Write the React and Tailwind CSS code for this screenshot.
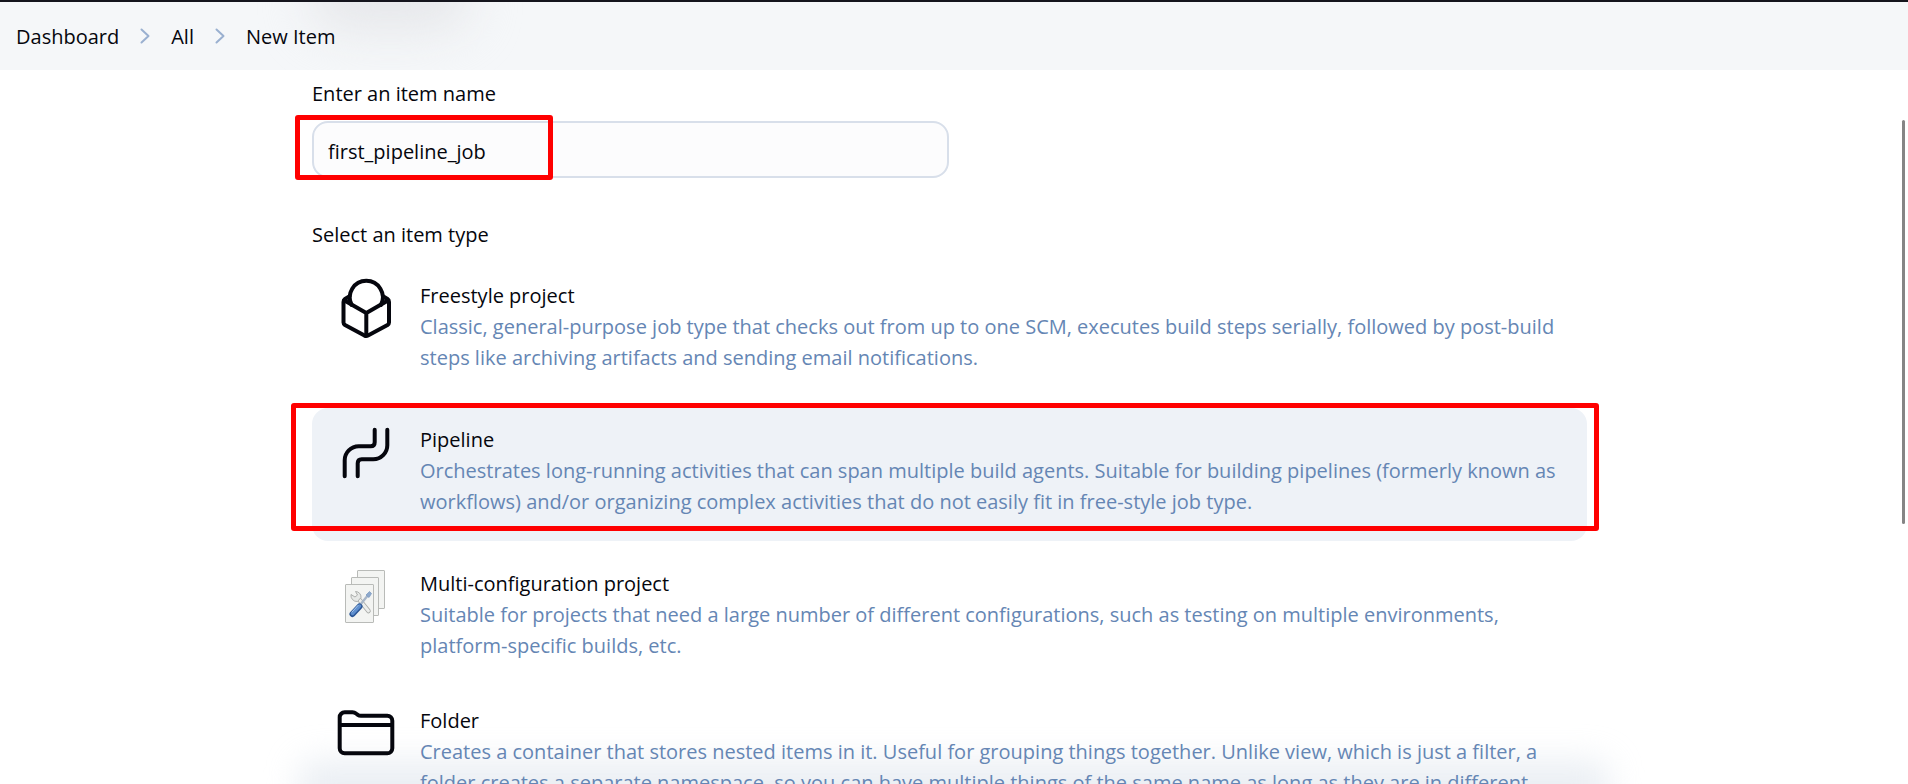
import React from "react";

function Chevron() {
  return (
    <svg className="h-4 w-[10px] shrink-0" viewBox="0 0 10 16" fill="none" stroke="#9ab0d0" strokeWidth="2" strokeLinecap="round" strokeLinejoin="round" aria-hidden="true">
      <path d="M1.5 1.5 8.5 8 1.5 14.5" />
    </svg>
  );
}

const lineIcon = {
  className: "h-[60px] w-[60px] shrink-0 overflow-visible",
  viewBox: "0 0 60 60",
  fill: "none",
  stroke: "#05060d",
  strokeWidth: 4,
  strokeLinecap: "round",
  strokeLinejoin: "round",
  "aria-hidden": true,
};

function FreestyleIcon() {
  return (
    <svg {...lineIcon}>
      <path d="M15.6 24.8A16.5 16.5 0 1 1 45 24.8" />
      <path d="M13.6 16.3 9 19Q7.5 20 7.5 22V42.500Q7.500 44 9 45L28.500 55.600Q30.300 56.500 32 55.600L51.500 45Q53 44 53 42.500V22Q53 20 51.500 19L47 16.300" />
      <path d="M8.500 20.500 30.300 33 52 20.500M30.300 33V55" />
    </svg>
  );
}

function PipelineIcon() {
  return (
    <svg {...lineIcon}>
      <path d="M38.700 5.700V18.300Q38.700 22.300 34.700 22.300H22.700A14 14 0 0 0 8.700 36.300V52.300" />
      <path d="M51.300 5.700V21.300A14 14 0 0 1 37.300 35.300H25.700Q21.700 35.300 21.700 39.300V52.300" />
    </svg>
  );
}

function FolderIcon() {
  return (
    <svg {...lineIcon}>
      <path d="M3.700 12.300A5 5 0 0 1 8.700 7.300H16.500Q18.500 7.300 20 8.500L21.800 9.800Q23 10.700 25 10.700H51.300A5 5 0 0 1 56.300 15.700V43.300A5 5 0 0 1 51.300 48.300H8.700A5 5 0 0 1 3.700 43.300ZM3.700 20H56.300" />
    </svg>
  );
}

function MultiIcon() {
  return (
    <svg className="h-[60px] w-[60px] shrink-0" viewBox="0 0 60 60" fill="none" aria-hidden="true">
      <g fill="#f3f4f2" stroke="#b9bbb8" strokeWidth="1">
        <rect x="21.500" y="2.500" width="27" height="38" rx="0.500" />
        <rect x="15.500" y="9.500" width="27" height="38" rx="0.500" />
        <rect x="9.500" y="16.500" width="28" height="38" rx="0.500" />
      </g>
      <path d="M22 30 32.500 43" stroke="#a9aba8" strokeWidth="4.500" strokeLinecap="round" />
      <path d="M22 30 32.500 43" stroke="#eceeec" strokeWidth="2.800" strokeLinecap="round" />
      <path d="M15 26.500 19 29 21.500 27 19.500 23.500A5.500 5.500 0 0 1 25 29.500L21.500 33.500A6 6 0 0 1 15 26.500Z" fill="#e6e8e6" stroke="#a5a7a5" strokeWidth="0.900" />
      <path d="M33 26 24 37" stroke="#a8b6c8" strokeWidth="2.400" />
      <path d="M30 27 33.500 23.500 35.500 25.500 33 29.500Z" fill="#8ea9cc" stroke="#7897c0" strokeWidth="0.700" />
      <path d="M23.500 38.500 16.500 46" stroke="#2c5796" strokeWidth="6" strokeLinecap="round" />
      <path d="M23.500 38 16.500 45.500" stroke="#5f8fce" strokeWidth="3.500" strokeLinecap="round" />
      <path d="M22 37.500 16 44" stroke="#a7c5ec" strokeWidth="1" strokeLinecap="round" />
    </svg>
  );
}

const items = [
  {
    id: "freestyle",
    title: "Freestyle project",
    icon: <FreestyleIcon />,
    lines: [
      "Classic, general-purpose job type that checks out from up to one SCM, executes build steps serially, followed by post-build",
      "steps like archiving artifacts and sending email notifications.",
    ],
  },
  {
    id: "pipeline",
    title: "Pipeline",
    icon: <PipelineIcon />,
    selected: true,
    lines: [
      "Orchestrates long-running activities that can span multiple build agents. Suitable for building pipelines (formerly known as",
      "workflows) and/or organizing complex activities that do not easily fit in free-style job type.",
    ],
  },
  {
    id: "multi",
    title: "Multi-configuration project",
    icon: <MultiIcon />,
    compact: true,
    lines: [
      "Suitable for projects that need a large number of different configurations, such as testing on multiple environments,",
      "platform-specific builds, etc.",
    ],
  },
  {
    id: "folder",
    title: "Folder",
    icon: <FolderIcon />,
    lines: [
      "Creates a container that stores nested items in it. Useful for grouping things together. Unlike view, which is just a filter, a",
      "folder creates a separate namespace, so you can have multiple things of the same name as long as they are in different",
    ],
  },
];

function Item({ item }) {
  return (
    <label
      className={`relative flex items-start gap-6 rounded-2xl px-6 pt-4 ${item.compact ? "pb-[17px]" : "pb-6"} ${item.selected ? "bg-[#eef2f7]" : ""}`}
    >
      <input type="radio" name="item-type" value={item.id} defaultChecked={item.selected} className="sr-only" />
      {item.icon}
      <span className="min-w-0 flex-1">
        <span className="block">{item.title}</span>
        {item.lines.map((line) => (
          <span key={line} className="block whitespace-nowrap text-[#6586b4]">{line}</span>
        ))}
      </span>
      {item.selected && (
        <span className="pointer-events-none absolute -top-[5px] -right-3 bottom-[10px] -left-[21px] rounded-[3px] border-5 border-[#ff0000]" />
      )}
    </label>
  );
}

export default function App() {
  return (
    <div className="relative flex h-screen flex-col overflow-hidden bg-white font-['Open_Sans','Noto_Sans',sans-serif] text-[20px] leading-[31px] text-[#05060d]">
      <div className="pointer-events-none absolute inset-x-0 bottom-0 flex h-20 justify-center overflow-hidden">
        <div className="mt-14 h-20 w-[1310px] shrink-0 rounded-2xl bg-[#d3dbe7]/45 blur-lg" />
      </div>

      <header className="relative shrink-0 overflow-hidden border-t-2 border-[#15151d] bg-[#f5f7f9] px-4">
        <div className="absolute -top-9 left-[310px] h-16 w-[160px] rounded-full bg-[#e6e7ea] blur-xl" />
        <nav aria-label="Breadcrumb" className="relative flex h-[68px] items-center gap-[21px]">
          <a href="#dashboard">Dashboard</a>
          <Chevron />
          <a href="#all">All</a>
          <Chevron />
          <a href="#new">New Item</a>
        </nav>
      </header>

      <div className="relative flex min-h-0 flex-1">
        <main className="min-w-0 flex-1">
          <form className="mx-auto max-w-[1275px] pt-2" onSubmit={(e) => e.preventDefault()}>
            <label htmlFor="name" className="block">Enter an item name</label>
            <div className="relative mt-3 max-w-[637px]">
              <input
                id="name"
                type="text"
                defaultValue="first_pipeline_job"
                className="block h-[57px] w-full rounded-2xl border-2 border-[#d8dfea] bg-[#fcfcfd] px-[14px] pt-1 outline-none"
              />
              <span className="pointer-events-none absolute -top-[6px] -left-[17px] h-[65px] w-[258px] rounded-[3px] border-5 border-[#ff0000]" />
            </div>
            <fieldset className="mt-[41px]">
              <legend className="block">Select an item type</legend>
              <div className="mt-[14px] flex flex-col gap-[11px]">
                {items.map((item) => (
                  <Item key={item.id} item={item} />
                ))}
              </div>
            </fieldset>
          </form>
        </main>
        <div className="w-[9px] shrink-0 pt-[50px] pl-[3px]">
          <div className="h-[404px] w-[3px] rounded-full bg-[#858585]" />
        </div>
      </div>
    </div>
  );
}
